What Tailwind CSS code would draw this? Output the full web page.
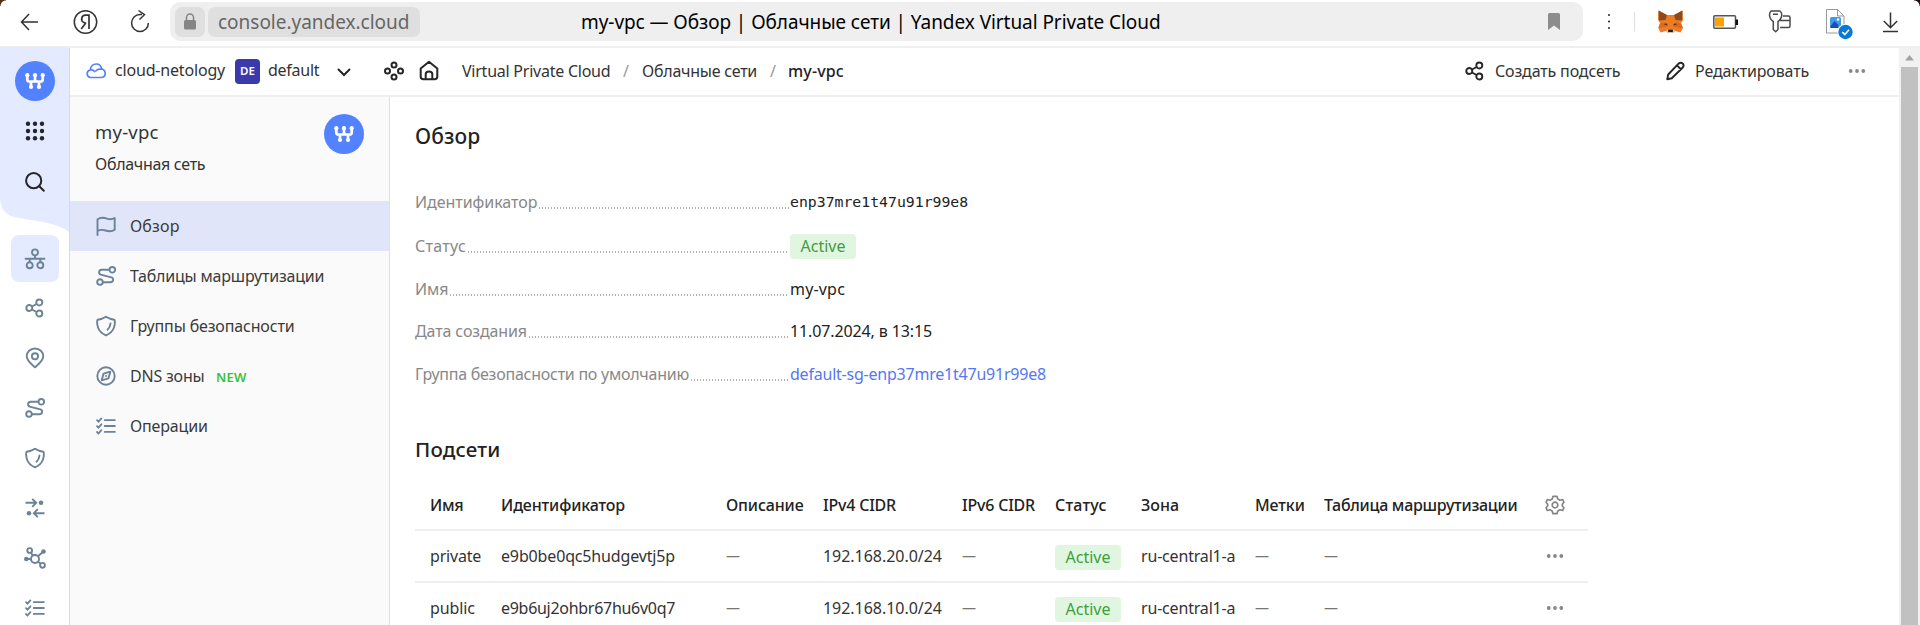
<!DOCTYPE html>
<html lang="ru">
<head>
<meta charset="utf-8">
<title>my-vpc — Обзор</title>
<script src="https://cdn.jsdelivr.net/npm/@tailwindcss/browser@4"></script>
</head>
<body class="w-[1920px] h-[625px] overflow-hidden bg-white font-['Noto_Sans',sans-serif] text-[16px] leading-5 text-[#333] whitespace-nowrap">
<svg class="hidden">
  <symbol id="vpc" viewBox="-20 -20 40 40"><circle r="20" fill="#5282ff"/><g fill="none" stroke="#fff" stroke-width="2.700"><path d="M-7.700-6V-1.500Q-7.700 .5-5.500 .5H-2Q0 .5 0-1.500V-6M0-1.500Q0 .5 2 .5H5.500Q7.700 .5 7.700-1.500V-6M-4 .5V6M4 .5V6"/></g><g fill="#fff"><circle cx="-7.700" cy="-5.800" r="2.100"/><circle cy="-5.800" r="2.100"/><circle cx="7.700" cy="-5.800" r="2.100"/><circle cx="-4" cy="6" r="2.100"/><circle cx="4" cy="6" r="2.100"/></g></symbol>
  <symbol id="net" viewBox="-11 -11 22 22"><g fill="none" stroke="currentColor" stroke-width="1.900"><circle cy="-6.600" r="3"/><path d="M0-3.600V-.3M-10.200-.3H10.200M-5.300-.3V3.200M5.300-.3V3.200"/><circle cx="-5.300" cy="6.300" r="3"/><circle cx="5.300" cy="6.300" r="3"/></g></symbol>
  <symbol id="share" viewBox="-11 -11 22 22"><g fill="none" stroke="currentColor" stroke-width="1.900"><circle cx="-5.700" r="3"/><circle cx="4.300" cy="-5.500" r="3"/><circle cx="4.300" cy="5.500" r="3"/><path d="M-3-1.500 1.600-4M-3 1.500 1.600 4"/></g></symbol>
  <symbol id="pin" viewBox="-11 -11 22 22"><g fill="none" stroke="currentColor" stroke-width="1.900"><path d="M0 9.300C-3 6.500-8.300 3-8.300-1.700a8.300 7.800 0 0 1 16.600 0C8.300 3 3 6.500 0 9.300Z" stroke-linejoin="round"/><circle cy="-1.700" r="3.100"/></g></symbol>
  <symbol id="route" viewBox="-11 -11 22 22"><g fill="none" stroke="currentColor" stroke-width="1.900"><circle cx="6.300" cy="-6.200" r="2.800"/><circle cx="-6" cy="6" r="2.800"/><path d="M3.500-6.300H-4.500a2.600 2.600 0 0 0-.8 5L5.300 1.300a2.500 2.500 0 0 1-.5 4.900H-3.200"/></g></symbol>
  <symbol id="shield" viewBox="-11 -11 22 22"><g fill="none" stroke="currentColor" stroke-width="1.900" stroke-linecap="round" stroke-linejoin="round"><path d="M0-9.200C2-7.900 5.500-6.600 8.200-6.300 9.300-6.100 8.900-1 8 1.500 6.600 5.500 2.500 8.300 0 9.300-2.500 8.300-6.600 5.500-8 1.500-8.900-1-9.300-6.100-8.200-6.300-5.500-6.600-2-7.900 0-9.200Z"/><path d="M4.500-2.500C4.300-.2 3.300 2.100 1.500 3.700"/></g></symbol>
  <symbol id="inout" viewBox="-11 -11 22 22"><g fill="none" stroke="currentColor" stroke-width="1.900"><path d="M-9.500-5.200H1.200M-2.800-9.200 1.200-5.200-2.800-1.200M9.500 5.200H-1.200M2.800 1.200-1.200 5.200 2.800 9.200"/></g><circle cx="6" cy="-5.200" r="2.300" fill="currentColor"/><circle cx="-6" cy="5.200" r="2.300" fill="currentColor"/></symbol>
  <symbol id="nodes" viewBox="-12 -12 24 24"><g fill="none" stroke="currentColor" stroke-width="1.900"><circle cy="1" r="4"/><circle cx="-5.300" cy="-7.500" r="2.400"/><circle cx="7.500" cy="7.300" r="2.400"/><path d="M-4-5.500-2.300-2.300M8-6 2.800-1.800M-8 1H-4M2.900 3.800 5.700 5.800"/></g><circle cx="8.500" cy="-6.500" r="2.300" fill="currentColor"/><circle cx="-8.700" cy="1" r="2.300" fill="currentColor"/></symbol>
  <symbol id="checks" viewBox="-11 -11 22 22"><g fill="none" stroke="currentColor" stroke-width="1.800" stroke-linecap="round"><path d="M-1.300-5.900H8.900M-1.300 0H8.900M-1.300 5.900H8.900M-9-5.800-7.500-4.300-4.600-7.600M-9 .1-7.500 1.600-4.600-1.700M-9 6-7.500 7.500-4.600 4.200"/></g></symbol>
  <symbol id="flag" viewBox="-11 -11 22 22"><path fill="none" stroke="currentColor" stroke-width="1.900" stroke-linecap="round" stroke-linejoin="round" d="M-8.500 9V-6.500C-5-9.300-2-8.400 1-7.300 4-6.200 6-6.500 8.700-8V3.700C5.500 6 2.500 5.500-.5 4.500-3.500 3.500-6 3.500-8.500 5"/></symbol>
  <symbol id="compass" viewBox="-11 -11 22 22"><g fill="none" stroke="currentColor" stroke-width="1.900"><circle r="8.700"/><path d="M4.300-4.300 2.400 2.400-4.300 4.300-2.400-2.400Z" stroke-linejoin="round"/></g><circle r="1" fill="currentColor"/></symbol>
  <symbol id="dots" viewBox="-11 -11 22 22"><g fill="currentColor"><circle cx="-6.300" r="1.900"/><circle r="1.900"/><circle cx="6.300" r="1.900"/></g></symbol>
</svg>

<!-- Browser toolbar -->
<header class="relative h-[48px] border-b-2 border-[#efefef] flex items-start">
  <div class="absolute left-0 top-0 size-[6px] bg-[radial-gradient(circle_at_100%_100%,white_5px,#5a2a1c_6px)]"></div>
  <div class="absolute right-0 top-0 size-[6px] bg-[radial-gradient(circle_at_0%_100%,white_5px,#1d1015_6px)]"></div>
  <div class="w-[170px] h-[44px] shrink-0">
    <svg class="w-[170px] h-[44px]" fill="none" stroke="#333" stroke-width="1.500"><path d="M38 22H21.500M29 14 21.500 22 29 30"/><circle cx="85.500" cy="22" r="11.200"/><path d="M89 29V15.200H85.500a3.800 3.800 0 0 0-1.500 7.300L86 23.500M85.800 23 81.200 29" stroke-width="1.700"/><path d="M142 14.600H140A8.400 8.400 0 1 0 148.400 23M138.500 10.500 144.500 14.700 139.500 19.500"/></svg>
  </div>
  <div class="mt-[2px] h-[39px] w-[1413px] rounded-[10px] bg-[#efefef] flex items-center pl-[5px] shrink-0">
    <div class="w-[30px] h-[30px] rounded-[7px] bg-[#dfdfdf] flex items-center justify-center"><svg class="w-3 h-[17px]" viewBox="0 0 12 17"><rect y="7" width="12" height="9.500" rx="1.500" fill="#858585"/><path d="M2.500 8V4.500a3.500 3.500 0 0 1 7 0V8" fill="none" stroke="#858585" stroke-width="1.500"/></svg></div>
    <div class="ml-[3px] w-[212px] h-[30px] rounded-[7px] bg-[#dfdfdf] flex items-center pl-[10px] text-[19px] text-[#666] tracking-[-0.02px]">console.yandex.cloud</div>
    <div class="ml-[161px] w-[967px] text-[19px] text-black tracking-[-0.06px]">my-vpc — Обзор | Облачные сети | Yandex Virtual Private Cloud</div>
    <svg class="w-3 h-[17px]" viewBox="0 0 12 17"><path d="M0 1.500Q0 0 1.500 0H10.500Q12 0 12 1.500V17L6 12.500 0 17Z" fill="#8c8c8c"/></svg>
  </div>
  <svg class="w-[337px] h-[44px] shrink-0" viewBox="1583 0 337 44" fill="none">
    <g fill="#333"><circle cx="1609" cy="15" r="1.100"/><circle cx="1609" cy="21.500" r="1.100"/><circle cx="1609" cy="28" r="1.100"/></g>
    <path d="M1634.500 12V31.500" stroke="#ddd"/>
    <path d="M1658.500 10.500 1667 15H1674L1682.500 10.500 1683 20 1681 23 1683 28 1680.500 32.500 1675 31 1673 33H1668L1666 31 1660.500 32.500 1658.300 28 1660 23 1658 20Z" fill="#f07c22"/>
    <path d="M1658.500 10.500 1667 15 1665.500 20 1659 20.500ZM1682.500 10.500 1674 15 1675.500 20 1682 20.500Z" fill="#8c4a22"/>
    <path d="M1660 23.500 1665.500 22 1667 27 1658.500 28ZM1681 23.500 1675.500 22 1674 27 1682.700 28Z" fill="#df6a1c"/>
    <path d="M1663.500 24 1667.500 25.800 1667 23.600ZM1677.500 24 1673.500 25.800 1674 23.600Z" fill="#3a3434"/>
    <path d="M1666 30.800 1668 29H1673L1675 30.800 1673 33H1668Z" fill="#cfc2b6"/><path d="M1668 29.500H1673L1672.800 32H1668.200Z" fill="#231f20"/>
    <rect x="1713.800" y="15.800" width="21.700" height="12.500" rx="1" stroke="#555" stroke-width="1.500"/><rect x="1715" y="17.500" width="9" height="9" fill="#ffa200"/><path d="M1735.500 19.500H1738V25H1735.500Z" fill="#111"/>
    <g stroke="#4a4a4a" stroke-width="1.500" stroke-linejoin="round"><path d="M1771 11H1780Q1781.800 12.300 1781.800 15 1781.500 19.500 1778 21.500V29.500L1775.700 31.700 1773.300 29.500V21.500Q1769.800 19.500 1769.500 15 1769.500 12.300 1771 11ZM1773 14.300H1778"/><path d="M1783 16H1788.500Q1790 16 1790 17.500V26Q1790 27.500 1788.500 27.500H1780M1780 20.500H1790"/></g>
    <path d="M1826.500 9.500H1837.500L1844 16V33H1826.500Z" fill="#fff" stroke="#999"/><path d="M1837.500 9.500V16H1844" stroke="#999"/>
    <rect x="1830" y="17" width="11" height="11" rx="1.500" fill="#3f9bea"/><path d="M1830 27 1834.500 21 1838.500 25 1838 28H1831Z" fill="#1b4fb8"/><circle cx="1838" cy="19.500" r="1.300" fill="#fff"/>
    <circle cx="1845.500" cy="32" r="8" fill="#fff"/><circle cx="1845.500" cy="32" r="7.200" fill="#0a78d6"/><path d="M1842.300 32 1844.800 34.500 1849 29.800" stroke="#fff" stroke-width="1.600"/>
    <path d="M1890.500 12.500V27.500M1883.800 21 1890.500 27.700 1897.200 21M1883 31.500H1898" stroke="#333" stroke-width="1.500"/>
  </svg>
</header>

<div class="flex h-[577px]">
  <!-- Navigation rail -->
  <aside class="w-[70px] shrink-0 border-r border-[#d9d9de] text-[#6c8298]">
    <div class="relative h-[187px]">
      <svg class="absolute left-0 -top-px w-[69px] h-[188px]" viewBox="0 47 69 188"><path d="M0 47H69V232Q60 225 43 222L19 218Q0 215 0 198Z" fill="#e4eaff"/></svg>
      <div class="relative flex flex-col items-center text-[#262626]">
        <svg class="size-10 mt-[13px]"><use href="#vpc"/></svg>
        <svg class="size-[22px] mt-[19px]" viewBox="-11 -11 22 22" fill="currentColor"><circle cx="-7" cy="-7.200" r="2.200"/><circle cy="-7.200" r="2.200"/><circle cx="7" cy="-7.200" r="2.200"/><circle cx="-7" r="2.200"/><circle r="2.200"/><circle cx="7" r="2.200"/><circle cx="-7" cy="7.200" r="2.200"/><circle cy="7.200" r="2.200"/><circle cx="7" cy="7.200" r="2.200"/></svg>
        <svg class="size-[22px] mt-[29px]" viewBox="-11 -11 22 22" fill="none" stroke="currentColor" stroke-width="2" stroke-linecap="round"><circle cx="-1.300" cy="-1.300" r="7.600"/><path d="M4.300 4.300 8.800 8.800"/></svg>
      </div>
    </div>
    <nav class="flex flex-col items-center">
      <div class="w-[48px] h-[47px] rounded-[8px] bg-[#e4eaff] flex items-center justify-center"><svg class="size-[22px]"><use href="#net"/></svg></div>
      <svg class="size-[22px] mt-[15px]"><use href="#share"/></svg>
      <svg class="size-[22px] mt-[28px]"><use href="#pin"/></svg>
      <svg class="size-[22px] mt-[28px]"><use href="#route"/></svg>
      <svg class="size-[22px] mt-[28px]"><use href="#shield"/></svg>
      <svg class="size-[22px] mt-[28px]"><use href="#inout"/></svg>
      <svg class="size-[24px] mt-[27px]"><use href="#nodes"/></svg>
      <svg class="size-[22px] mt-[27px]"><use href="#checks"/></svg>
    </nav>
  </aside>

  <div class="w-[1829px] shrink-0">
    <!-- Breadcrumb bar -->
    <div class="h-[49px] border-b-2 border-[#efefef] flex items-center pl-4 pb-[2px]">
      <svg class="w-5 h-4 mt-px text-[#5282ff]" viewBox="0 0 20 16" fill="none" stroke="currentColor" stroke-width="1.700" stroke-linecap="round" stroke-linejoin="round"><path d="M4.700 14.500A3.800 3.800 0 0 1 4.200 7C4.700 3.500 7 1 10.200 1 13.300 1 15.300 3.200 15.700 6 18 6.500 19.200 8.300 19.200 10.300 19.200 12.800 17.500 14.500 15 14.500ZM10 7.800C11 6.500 13 5.800 15.500 6.200M4.200 7C6 6.500 7.700 7.300 8.500 8.500"/></svg>
      <span class="w-[110px] ml-[9px] -mt-[2px] tracking-[-0.18px]">cloud-netology</span>
      <div class="ml-[10px] mt-px size-[25px] rounded-[4px] bg-[#3a3aad] text-white text-[11.500px] font-semibold flex items-center justify-center">DE</div>
      <span class="w-[51px] ml-[8px] -mt-[2px] tracking-[-0.25px]">default</span>
      <svg class="ml-[18px] mt-0.5 w-[14px] h-[10px]" viewBox="0 0 14 10" fill="none" stroke="#262626" stroke-width="2" stroke-linecap="round"><path d="M1.500 2.500 7 8 12.500 2.500"/></svg>
      <svg class="ml-[32px] mt-px size-[22px]" viewBox="-11 -11 22 22" fill="none" stroke="#262626" stroke-width="2"><circle cy="-6" r="2.500"/><circle cy="6" r="2.500"/><circle cx="-6.500" r="2.500"/><circle cx="6.500" r="2.500"/></svg>
      <svg class="ml-[13px] size-[22px]" viewBox="-11 -11 22 22" fill="none" stroke="#262626" stroke-width="2" stroke-linejoin="round"><path d="M-8.300-2.500 0-9.200 8.300-2.500V5.500Q8.300 8.300 5.500 8.300H-5.500Q-8.300 8.300-8.300 5.500ZM-3.300 8V3.200Q-3.300 .5 0 .5 3.300 .5 3.300 3.200V8"/></svg>
      <span class="w-[148px] ml-[22px] tracking-[-0.24px]">Virtual Private Cloud</span>
      <span class="w-[6px] ml-[13px] text-[#999]">/</span>
      <span class="w-[115px] ml-[13px] tracking-[-0.24px]">Облачные сети</span>
      <span class="w-[6px] ml-[13px] text-[#999]">/</span>
      <span class="w-[56px] ml-[12px] font-medium text-[#222] tracking-[0.15px]">my-vpc</span>
      <svg class="ml-auto size-[22px] text-[#262626]"><use href="#share"/></svg>
      <span class="w-[125px] ml-[9px] tracking-[-0.15px]">Создать подсеть</span>
      <svg class="ml-[45px] size-[20px]" viewBox="-10 -10 20 20" fill="none" stroke="#262626" stroke-width="1.900" stroke-linejoin="round"><path d="M-7.700 8.200-6.800 3.500 3.500-7.300Q5.700-9.300 7.800-7.300 9.500-5.300 7.500-3.200L-3.200 7.200ZM2-5.600 5.900-1.800"/></svg>
      <span class="w-[114px] ml-[10px] tracking-[-0.13px]">Редактировать</span>
      <svg class="ml-[37px] mr-[31px] size-[22px] text-[#888]"><use href="#dots"/></svg>
    </div>

    <div class="flex h-[528px]">
      <!-- Resource menu -->
      <aside class="w-[320px] shrink-0 bg-[#fafafa] border-r border-[#e0e0e0]">
        <div class="h-[104px] px-[25px] pt-[17px] flex justify-between">
          <div><div class="text-[18.500px] leading-[36px] tracking-[0.2px]">my-vpc</div><div class="mt-[4px] tracking-[-0.3px]">Облачная сеть</div></div>
          <svg class="size-10"><use href="#vpc"/></svg>
        </div>
        <nav class="text-[#3a3a3a]">
          <div class="h-[50px] bg-[#e1e5f9] pl-[25px] flex items-center"><svg class="size-[22px] text-[#6c8298]"><use href="#flag"/></svg><span class="ml-[13px] tracking-[0.15px]">Обзор</span></div>
          <div class="h-[50px] pl-[25px] flex items-center"><svg class="size-[22px] text-[#6c8298]"><use href="#route"/></svg><span class="ml-[13px] tracking-[-0.2px]">Таблицы маршрутизации</span></div>
          <div class="h-[50px] pl-[25px] flex items-center"><svg class="size-[22px] text-[#6c8298]"><use href="#shield"/></svg><span class="ml-[13px] tracking-[-0.16px]">Группы безопасности</span></div>
          <div class="h-[50px] pl-[25px] flex items-center"><svg class="size-[22px] text-[#6c8298]"><use href="#compass"/></svg><span class="w-[75px] ml-[13px] tracking-[-0.2px]">DNS зоны</span><span class="ml-[11px] mt-px text-[13px] font-semibold text-[#3ac13a] tracking-[0.2px]">NEW</span></div>
          <div class="h-[50px] pl-[25px] flex items-center"><svg class="size-[22px] text-[#6c8298]"><use href="#checks"/></svg><span class="ml-[13px] tracking-[-0.15px]">Операции</span></div>
        </nav>
      </aside>

      <!-- Overview -->
      <main class="pl-[25px] pt-[25px]">
        <h1 class="h-7 leading-7 text-[21px] font-medium text-[#222] tracking-[0.1px]">Обзор</h1>
        <dl class="mt-[42px] w-[800px] text-[#222]">
          <div class="flex h-[20px] mb-[21px] items-center"><dt class="w-[375px] flex items-center text-[#888]"><span class="tracking-[-0.05px]">Идентификатор</span><i class="ml-[2px] mr-px flex-1 h-[2px] mt-[11px] bg-[repeating-linear-gradient(90deg,#b0b0b0_0_1px,#fff_1px_3px)]"></i></dt><dd class="font-['DejaVu_Sans_Mono',monospace] text-[14.800px]">enp37mre1t47u91r99e8</dd></div>
          <div class="flex h-[26px] mb-[20px] items-center"><dt class="w-[375px] flex items-center text-[#888]"><span class="tracking-[0.3px]">Статус</span><i class="ml-[2px] mr-px flex-1 h-[2px] mt-[11px] bg-[repeating-linear-gradient(90deg,#b0b0b0_0_1px,#fff_1px_3px)]"></i></dt><dd class="w-[66px] h-[25px] rounded-[4px] bg-[#e1f6e1] text-[#3f9e3f] text-center leading-[24px]">Active</dd></div>
          <div class="flex h-[20px] mb-[22px] items-center"><dt class="w-[375px] flex items-center text-[#888]"><span class="tracking-[-0.1px]">Имя</span><i class="ml-[2px] mr-px flex-1 h-[2px] mt-[11px] bg-[repeating-linear-gradient(90deg,#b0b0b0_0_1px,#fff_1px_3px)]"></i></dt><dd class="tracking-[0.18px]">my-vpc</dd></div>
          <div class="flex h-[20px] mb-[23px] items-center"><dt class="w-[375px] flex items-center text-[#888]"><span class="tracking-[-0.12px]">Дата создания</span><i class="ml-[2px] mr-px flex-1 h-[2px] mt-[11px] bg-[repeating-linear-gradient(90deg,#b0b0b0_0_1px,#fff_1px_3px)]"></i></dt><dd class="tracking-[-0.12px]">11.07.2024, в 13:15</dd></div>
          <div class="flex h-[20px] items-center"><dt class="w-[375px] flex items-center text-[#888]"><span class="tracking-[-0.25px]">Группа безопасности по умолчанию</span><i class="ml-[2px] mr-px flex-1 h-[2px] mt-[11px] bg-[repeating-linear-gradient(90deg,#b0b0b0_0_1px,#fff_1px_3px)]"></i></dt><dd class="text-[#5577f2] tracking-[-0.22px]">default-sg-enp37mre1t47u91r99e8</dd></div>
        </dl>
        <h2 class="mt-[51px] h-7 leading-7 text-[20.500px] font-medium text-[#222] tracking-[0.2px]">Подсети</h2>

        <div class="mt-[15px] w-[1173px]">
          <div class="h-[53px] border-b-2 border-[#efefef] grid grid-cols-[71px_225px_97px_139px_93px_86px_114px_69px_222px_1fr] pt-[2px] pl-[15px] items-center font-medium text-[#222]">
            <span class="tracking-[-0.3px]">Имя</span><span class="tracking-[-0.13px]">Идентификатор</span><span class="tracking-[-0.15px]">Описание</span><span class="tracking-[-0.2px]">IPv4 CIDR</span><span class="tracking-[-0.2px]">IPv6 CIDR</span><span class="tracking-[0.2px]">Статус</span><span>Зона</span><span class="tracking-[-0.1px]">Метки</span><span class="tracking-[-0.28px]">Таблица маршрутизации</span>
            <svg class="ml-[-2px] size-[22px]" viewBox="-11 -11 22 22" fill="none" stroke="#858585" stroke-width="1.700" stroke-linejoin="round"><path d="M-2-8.700H2L2.800-6 5-4.800 7.700-5.500 8.900-2.700 7.300-.8V.8L8.900 2.700 7.700 5.500 5 4.800 2.800 6 2 8.700H-2L-2.800 6-5 4.800-7.700 5.500-8.900 2.700-7.300 .8V-.8L-8.900-2.700-7.700-5.500-5-4.800-2.800-6Z"/><circle r="2.800"/></svg>
          </div>
          <div class="h-[52px] border-b-2 border-[#efefef] grid grid-cols-[71px_225px_97px_139px_93px_86px_114px_69px_222px_1fr] pl-[15px] items-center">
            <span class="tracking-[-0.2px]">private</span><span class="tracking-[-0.15px]">e9b0be0qc5hudgevtj5p</span><span class="text-[14px] text-[#777]">—</span><span class="tracking-[-0.04px]">192.168.20.0/24</span><span class="text-[14px] text-[#777]">—</span><span class="w-[66px] h-[25px] mt-[2px] rounded-[4px] bg-[#e1f6e1] text-[#3f9e3f] text-center leading-[24px]">Active</span><span class="tracking-[-0.18px]">ru-central1-a</span><span class="text-[14px] text-[#777]">—</span><span class="text-[14px] text-[#777]">—</span><svg class="ml-[-2px] size-[22px] text-[#888]"><use href="#dots"/></svg>
          </div>
          <div class="h-[50px] grid grid-cols-[71px_225px_97px_139px_93px_86px_114px_69px_222px_1fr] pl-[15px] items-center">
            <span class="tracking-[-0.09px]">public</span><span class="tracking-[-0.29px]">e9b6uj2ohbr67hu6v0q7</span><span class="text-[14px] text-[#777]">—</span><span class="tracking-[-0.04px]">192.168.10.0/24</span><span class="text-[14px] text-[#777]">—</span><span class="w-[66px] h-[25px] mt-[2px] rounded-[4px] bg-[#e1f6e1] text-[#3f9e3f] text-center leading-[24px]">Active</span><span class="tracking-[-0.18px]">ru-central1-a</span><span class="text-[14px] text-[#777]">—</span><span class="text-[14px] text-[#777]">—</span><svg class="ml-[-2px] size-[22px] text-[#888]"><use href="#dots"/></svg>
          </div>
        </div>
      </main>
    </div>
  </div>

  <!-- Scrollbar -->
  <div class="flex-1 bg-[#f1f1f1] flex flex-col items-center">
    <svg class="h-[19px] w-[9px] shrink-0" viewBox="0 0 9 19"><path d="M0 12.500 4.500 7 9 12.500Z" fill="#a3a3a3"/></svg>
    <div class="w-[17px] flex-1 bg-[#c1c1c1]"></div>
  </div>
</div>
</body>
</html>
